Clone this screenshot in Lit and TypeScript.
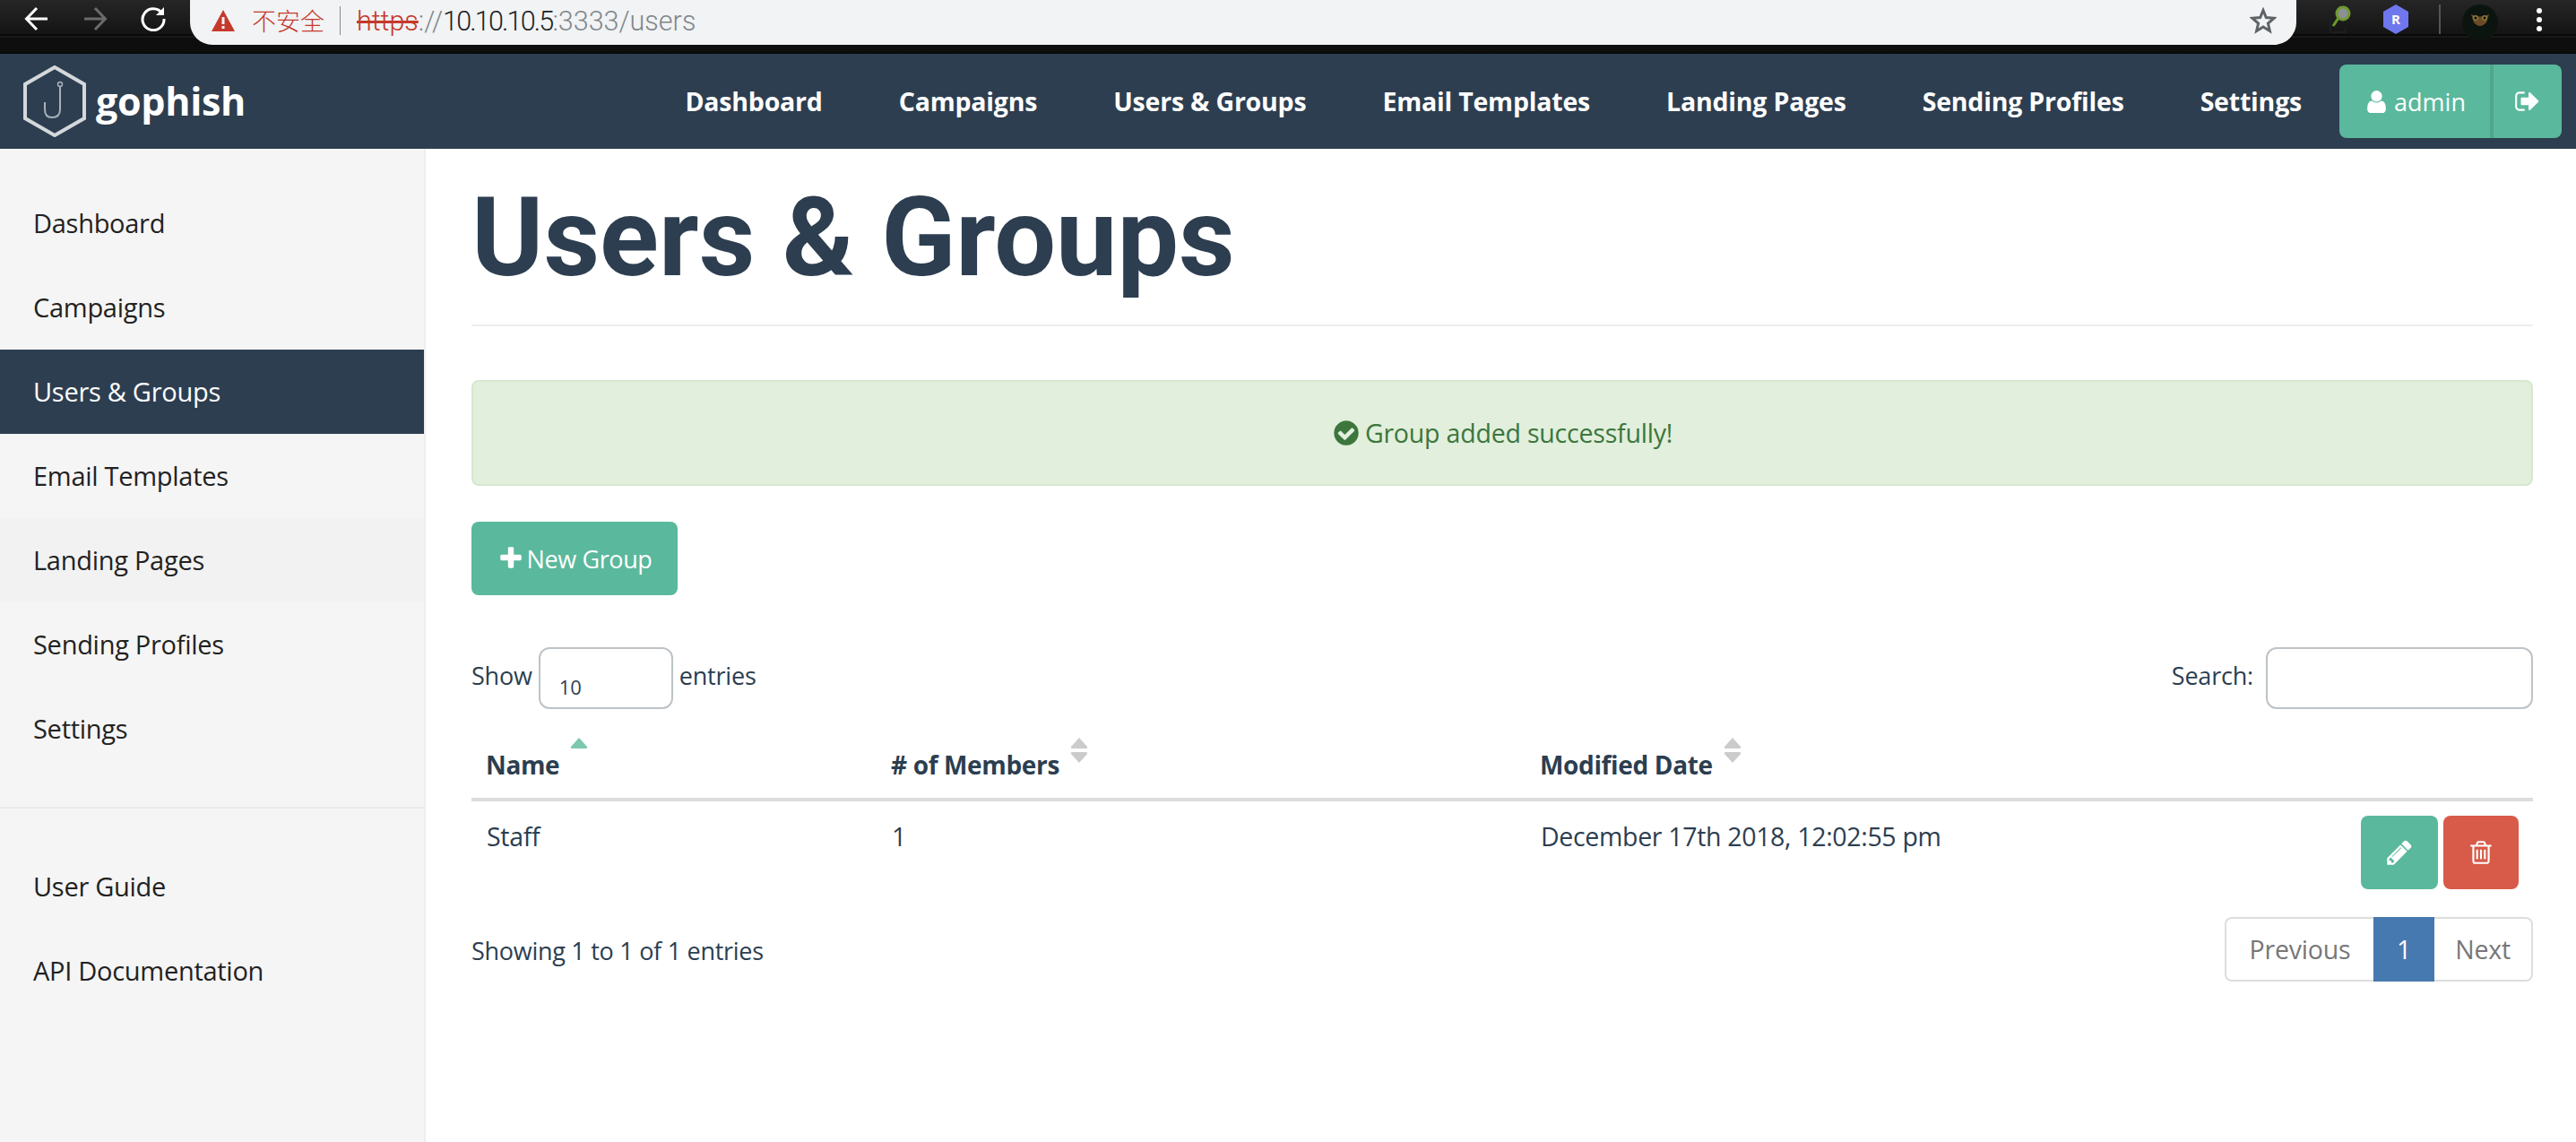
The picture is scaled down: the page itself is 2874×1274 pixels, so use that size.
import { LitElement, html, css, svg } from 'lit'
import { customElement } from 'lit/decorators.js'

const FA = {
  check: 'M1412 734q0-28-18-46l-91-90q-19-19-45-19t-45 19l-408 407-226-226q-19-19-45-19t-45 19l-91 90q-18 18-18 46 0 27 18 45l362 362q19 19 45 19 27 0 46-19l543-543q18-18 18-45zm252 162q0 209-103 385.5t-279.5 279.5-385.5 103-385.5-103-279.5-279.5-103-385.5 103-385.5 279.5-279.5 385.5-103 385.5 103 279.5 279.5 103 385.5z',
  user: 'M1536 1399q0 109-62.5 187t-150.5 78h-854q-88 0-150.5-78t-62.5-187q0-85 8.5-160.5t31.5-152 58.5-131 94-89 134.5-34.5q131 128 313 128t313-128q76 0 134.5 34.5t94 89 58.5 131 31.5 152 8.5 160.5zm-256-887q0 159-112.5 271.5t-271.5 112.5-271.5-112.5-112.5-271.5 112.5-271.5 271.5-112.5 271.5 112.5 112.5 271.5z',
  plus: 'M1600 736v192q0 40-28 68t-68 28h-416v416q0 40-28 68t-68 28h-192q-40 0-68-28t-28-68v-416h-416q-40 0-68-28t-28-68v-192q0-40 28-68t68-28h416v-416q0-40 28-68t68-28h192q40 0 68 28t28 68v416h416q40 0 68 28t28 68z',
  signOut: 'M704 1440q0 4 1 20t.5 26.5-3 23.5-10 19.5-20.5 6.5h-320q-119 0-203.5-84.5t-84.5-203.5v-704q0-119 84.5-203.5t203.5-84.5h320q13 0 22.5 9.5t9.5 22.5q0 4 1 20t.5 26.5-3 23.5-10 19.5-20.5 6.5h-320q-66 0-113 47t-47 113v704q0 66 47 113t113 47h312l11.5 1 11.5 3 8 5.5 7 9 2 13.5zm928-544q0 26-19 45l-544 544q-19 19-45 19t-45-19-19-45v-288h-448q-26 0-45-19t-19-45v-384q0-26 19-45t45-19h448v-288q0-26 19-45t45-19 45 19l544 544q19 19 19 45z',
  pencil: 'M491 1536l91-91-235-235-91 91v107h128v128h107zm523-928q0-22-22-22-10 0-17 7l-542 542q-7 7-7 17 0 22 22 22 10 0 17-7l542-542q7-7 7-17zm-54-192l416 416-832 832h-416v-416zm683 96q0 53-37 90l-166 166-416-416 166-165q36-38 90-38 53 0 91 38l235 234q37 39 37 91z',
  trash: 'M704 736v576q0 14-9 23t-23 9h-64q-14 0-23-9t-9-23v-576q0-14 9-23t23-9h64q14 0 23 9t9 23zm256 0v576q0 14-9 23t-23 9h-64q-14 0-23-9t-9-23v-576q0-14 9-23t23-9h64q14 0 23 9t9 23zm256 0v576q0 14-9 23t-23 9h-64q-14 0-23-9t-9-23v-576q0-14 9-23t23-9h64q14 0 23 9t9 23zm128 724v-948h-896v948q0 22 7 40.5t14.5 27 10.5 8.5h832q3 0 10.5-8.5t14.5-27 7-40.5zm-672-1076h448l-48-117q-7-9-17-11h-317q-10 2-17 11zm928 32v64q0 14-9 23t-23 9h-96v948q0 83-47 143.5t-113 60.5h-832q-66 0-113-58.5t-47-141.5v-952h-96q-14 0-23-9t-9-23v-64q0-14 9-23t23-9h309l70-167q15-37 54-63t79-26h320q40 0 79 26t54 63l70 167h309q14 0 23 9t9 23z',
}

const fa = (d: string, size: number) =>
  html`<svg class="fa" width=${size} height=${size} viewBox="0 0 1792 1792" fill="currentColor"><path d=${d}></path></svg>`

// sort arrows of the table head, asc = only the upper one, lit in green
const sortIcon = (asc: boolean) => html`<svg class="sort" width="20" height="28" viewBox="0 0 20 28">
  ${asc
    ? svg`<path d="M10 0 L19 10 Q20 12 17 12 L3 12 Q0 12 1 10 Z" fill="#7cc8b1"></path>`
    : svg`<path d="M10 0 L19 10 Q20 12 17 12 L3 12 Q0 12 1 10 Z" fill="#cbcbcb"></path>
          <path d="M10 28 L19 18 Q20 16 17 16 L3 16 Q0 16 1 18 Z" fill="#cbcbcb"></path>`}
</svg>`

const topNav = ['Dashboard', 'Campaigns', 'Users & Groups', 'Email Templates', 'Landing Pages', 'Sending Profiles', 'Settings']
const sideNav = ['Dashboard', 'Campaigns', 'Users & Groups', 'Email Templates', 'Landing Pages', 'Sending Profiles', 'Settings']

@customElement('app-root')
export class AppRoot extends LitElement {
  static styles = css`
    :host {
      display: flex;
      flex-direction: column;
      height: 1274px;
      overflow: hidden;
      background: #fff;
      color: #2c3e50;
      font-family: "Open Sans", "Liberation Sans", sans-serif;
      font-size: 28.5px;
    }
    .fa { display: block; flex: none; }

    /* browser chrome */
    .chrome {
      height: 60px;
      flex: none;
      display: flex;
      background: linear-gradient(#262626 0, #141414 38px, #000 39px, #222 41px, #0e0e0e 42px, #0d0d0d 59px, #000 60px);
    }
    .tools { width: 212px; flex: none; display: flex; align-items: flex-start; padding: 7px 0 0 27px; gap: 37px; box-sizing: border-box; }
    .pill {
      width: 2350px;
      height: 50px;
      flex: none;
      box-sizing: border-box;
      background: #f1f3f4;
      border-radius: 0 0 25px 25px / 0 0 25px 25px;
      display: flex;
      align-items: center;
      padding: 0 22px 4px 24px;
      font-family: Roboto, sans-serif;
      font-size: 30.5px;
      font-weight: 300;
      color: #80868b;
    }
    .unsafe {
      font-family: "Noto Sans CJK SC", sans-serif;
      color: #c5392c;
      font-size: 27px;
      margin-left: 19px;
      padding-right: 17px;
      border-right: 1.5px solid #8a8a8a;
      line-height: 32px;
      margin-right: 18px;
    }
    .strike { color: #c5392c; text-decoration: line-through; }
    .host { color: #202124; font-weight: 300; letter-spacing: -1.8px; }
    .star { margin-left: auto; }
    .exts { flex: 1; display: flex; align-items: flex-start; padding: 5px 0 0 36px; }

    /* navbar */
    .navbar {
      height: 106px;
      flex: none;
      background: #2d3e50;
      display: flex;
      align-items: center;
      padding-right: 16px;
      box-sizing: border-box;
    }
    .brand {
      display: flex;
      align-items: flex-start;
      padding-left: 26px;
      color: #fff;
      font-size: 43px;
      font-weight: 700;
      gap: 11px;
      letter-spacing: -0.3px;
    }
    .brand span { line-height: 60px; padding-top: 10px; }
    .links { margin-left: auto; display: flex; gap: 85px; margin-right: 42px; }
    .links a { color: #fff; font-weight: 700; font-size: 28.5px; white-space: nowrap; letter-spacing: -0.2px; }
    .btn-group { display: flex; height: 82px; border-radius: 8px; overflow: hidden; background: #5ab89c; color: #fff; }
    .btn-admin { width: 168px; display: flex; align-items: center; justify-content: center; gap: 5px; border-right: 4px solid #4fa78c; font-size: 27px; }
    .btn-out { width: 76px; display: flex; align-items: center; justify-content: center; }

    .body { flex: 1; display: flex; min-height: 0; }

    /* sidebar */
    .sidebar {
      width: 475px;
      flex: none;
      box-sizing: border-box;
      background: #f5f5f5;
      border-right: 2px solid #eeeeee;
      padding-top: 36px;
      color: #222;
    }
    .sidebar a { display: flex; align-items: center; height: 94px; box-sizing: border-box; padding: 0 0 2px 37px; font-size: 29px; letter-spacing: -0.28px; }
    .sidebar a.active { background: #2d3e50; color: #fff; }
    .sidebar a.dim { background: #f2f2f2; }
    .sidebar hr { margin: 40px 0 40px; border: 0; border-top: 2px solid #eaeaea; }

    /* main */
    .main { flex: 1; min-width: 0; padding: 0 48px 0 51px; }
    h1 {
      margin: 0;
      height: 198px;
      box-sizing: border-box;
      border-bottom: 2px solid #eeeeee;
      font-family: Roboto, sans-serif;
      font-weight: 700;
      font-size: 122px;
      line-height: 199px;
      color: #2d3e50;
      white-space: nowrap;
    }
    .alert {
      margin-top: 60px;
      height: 118px;
      box-sizing: border-box;
      background: #e1efdc;
      border: 2px solid #d6e8cd;
      border-radius: 8px;
      color: #3c763d;
      display: flex;
      align-items: center;
      justify-content: center;
      gap: 5px;
      font-size: 28.5px;
      letter-spacing: -0.2px;
    }
    .btn-new {
      margin-top: 40px;
      width: 230px;
      height: 82px;
      border-radius: 8px;
      background: #5ab89c;
      color: #fff;
      display: flex;
      align-items: center;
      justify-content: center;
      gap: 3px;
      font-size: 27px;
      letter-spacing: -0.4px;
    }
    .controls {
      margin-top: 58px;
      height: 69px;
      display: flex;
      align-items: flex-start;
      justify-content: space-between;
      font-size: 27px;
      letter-spacing: -0.2px;
      line-height: 64px;
    }
    .controls > div { display: flex; align-items: flex-start; gap: 7px; }
    .box { box-sizing: border-box; height: 69px; border: 2px solid #bdc3c7; border-radius: 12px; background: #fff; }
    .select { width: 150px; padding: 24px 0 0 21px; font-size: 22px; line-height: 36px; letter-spacing: 0; }
    .search { width: 298px; margin-left: 7px; }

    table { width: 100%; border-collapse: collapse; table-layout: fixed; }
    th {
      height: 99px;
      padding: 0 0 0 16px;
      border-bottom: 4px solid #dddddd;
      text-align: left;
      vertical-align: bottom;
      font-weight: 700;
      font-size: 28px;
      letter-spacing: -0.35px;
    }
    .head { display: flex; align-items: flex-start; gap: 12px; height: 67px; }
    .head span { padding-top: 10px; line-height: 40px; }
    .sort { display: block; margin-top: 0; }
    td { height: 116px; padding: 16px 0 0 17px; box-sizing: border-box; vertical-align: top; line-height: 46px; font-size: 28.5px; letter-spacing: -0.33px; }
    .actions { display: flex; justify-content: flex-end; gap: 6px; padding-right: 16px; }
    .act { height: 82px; border-radius: 8px; display: flex; align-items: center; justify-content: center; color: #fff; }
    .act.edit { width: 86px; background: #5ab89c; }
    .act.del { width: 84px; background: #d85a49; }

    .footer { margin-top: 15px; display: flex; justify-content: space-between; align-items: center; font-size: 27px; letter-spacing: -0.28px; }
    .footer > span { padding-top: 2px; }
    .pager { display: flex; height: 72px; box-sizing: border-box; color: #777; font-size: 28.5px; letter-spacing: -0.2px; }
    .pager div { display: flex; align-items: center; justify-content: center; box-sizing: border-box; border: 2px solid #ddd; background: #fff; }
    .pager .prev { width: 166px; border-right: 0; border-radius: 8px 0 0 8px; }
    .pager .cur { width: 68px; background: #4679b0; color: #fff; border-color: #4679b0; }
    .pager .next { width: 110px; border-left: 0; border-radius: 0 8px 8px 0; }
  `

  render() {
    return html`
      <div class="chrome">
        <div class="tools">
          <svg width="28" height="28" viewBox="0 0 28 28" fill="none" stroke="#fff" stroke-width="3"><path d="M26 14H3M14 2 2.500 14 14 26"></path></svg>
          <svg width="28" height="28" viewBox="0 0 28 28" fill="none" stroke="#6b6b6b" stroke-width="3"><path d="M2 14H25M14 2 25.500 14 14 26"></path></svg>
          <svg width="28" height="28" viewBox="0 0 28 28" fill="none" stroke="#fff" stroke-width="3"><path d="M24 8A12 12 0 1 0 26 14"></path><path d="M26 1V10H17Z" fill="#fff" stroke="none"></path></svg>
        </div>
        <div class="pill">
          <svg width="26" height="24" viewBox="0 0 26 24"><path d="M13 0 26 24H0Z" fill="#c5392c"></path><rect x="11.500" y="8" width="3" height="8" fill="#f1f3f4"></rect><rect x="11.500" y="18" width="3" height="3" fill="#f1f3f4"></rect></svg>
          <span class="unsafe">不安全</span>
          <span class="strike">https</span><span>://</span><span class="host">10.10.10.5</span><span>:3333/users</span>
          <svg class="star" width="30" height="30" viewBox="0 0 30 30" fill="none" stroke="#5f6368" stroke-width="3" stroke-linejoin="miter"><path d="M15 3.500 18.300 11.600 27 12.300 20.400 18 22.400 26.500 15 22 7.600 26.500 9.600 18 3 12.300 11.700 11.600Z"></path></svg>
        </div>
        <div class="exts">
          <svg width="26" height="34" viewBox="0 0 26 34" fill="none">
            <path d="M5 8H2V31H19V26" stroke="#1e1e1e" stroke-width="2"></path>
            <circle cx="16" cy="10" r="7" fill="#8d9092" stroke="#6d9a2e" stroke-width="3"></circle>
            <path d="M11 15 5 24" stroke="#6d9a2e" stroke-width="3"></path>
          </svg>
          <svg style="margin-left:34px" width="30" height="34" viewBox="0 0 30 34">
            <path d="M15 0 29 8V25L15 33 1 25V8Z" fill="#6f77ee"></path>
            <text x="15" y="22" font-family="Open Sans" font-weight="700" font-size="15" fill="#fff" text-anchor="middle">R</text>
          </svg>
          <svg style="margin-left:33px" width="2" height="33" viewBox="0 0 2 33"><rect width="2" height="33" fill="#555"></rect></svg>
          <svg style="margin-left:24px" width="40" height="40" viewBox="0 0 40 40">
            <circle cx="20" cy="20" r="20" fill="#0c1410"></circle>
            <path d="M10 11Q20 16 30 11L27 20Q20 28 13 20Z" fill="#6b4a28"></path>
            <circle cx="15" cy="15" r="3" fill="#8a7a3c"></circle>
            <circle cx="25" cy="15" r="3" fill="#8a7a3c"></circle>
            <circle cx="15" cy="15" r="1.500" fill="#0c0c08"></circle>
            <circle cx="25" cy="15" r="1.500" fill="#0c0c08"></circle>
          </svg>
          <svg style="margin-left:43px;margin-top:4px" width="6" height="28" viewBox="0 0 6 28" fill="#fff">
            <circle cx="3" cy="3" r="3"></circle><circle cx="3" cy="13" r="3"></circle><circle cx="3" cy="23" r="3"></circle>
          </svg>
        </div>
      </div>

      <div class="navbar">
        <div class="brand">
          <svg width="70" height="80" viewBox="0 0 70 80" fill="none">
            <path d="M35 2 68 21V59L35 78 2 59V21Z" stroke="#d4d8db" stroke-width="4"></path>
            <circle cx="41" cy="21" r="2.500" stroke="#a9b2ba" stroke-width="1.500"></circle>
            <path d="M41 24V49Q41 58 32 58 24 58 24 49V41" stroke="#a9b2ba" stroke-width="2"></path>
          </svg>
          <span>gophish</span>
        </div>
        <div class="links">${topNav.map(n => html`<a>${n}</a>`)}</div>
        <div class="btn-group">
          <div class="btn-admin">${fa(FA.user, 29)}<span>admin</span></div>
          <div class="btn-out">${fa(FA.signOut, 30)}</div>
        </div>
      </div>

      <div class="body">
        <nav class="sidebar">
          ${sideNav.map(n => html`<a class="${n === 'Users & Groups' ? 'active' : n === 'Landing Pages' ? 'dim' : ''}">${n}</a>`)}
          <hr />
          <a>User Guide</a>
          <a>API Documentation</a>
        </nav>

        <main class="main">
          <h1>Users &amp; Groups</h1>
          <div class="alert">${fa(FA.check, 32)}<span>Group added successfully!</span></div>
          <div class="btn-new">${fa(FA.plus, 30)}<span>New Group</span></div>

          <div class="controls">
            <div>Show <div class="box select">10</div> entries</div>
            <div>Search: <div class="box search"></div></div>
          </div>

          <table>
            <colgroup><col style="width:452px" /><col style="width:724px" /><col /><col style="width:500px" /></colgroup>
            <thead>
              <tr>
                <th><div class="head"><span>Name</span>${sortIcon(true)}</div></th>
                <th><div class="head"><span># of Members</span>${sortIcon(false)}</div></th>
                <th><div class="head"><span>Modified Date</span>${sortIcon(false)}</div></th>
                <th></th>
              </tr>
            </thead>
            <tbody>
              <tr>
                <td>Staff</td>
                <td>1</td>
                <td>December 17th 2018, 12:02:55 pm</td>
                <td>
                  <div class="actions">
                    <div class="act edit">${fa(FA.pencil, 32)}</div>
                    <div class="act del">${fa(FA.trash, 30)}</div>
                  </div>
                </td>
              </tr>
            </tbody>
          </table>

          <div class="footer">
            <span>Showing 1 to 1 of 1 entries</span>
            <div class="pager">
              <div class="prev">Previous</div>
              <div class="cur">1</div>
              <div class="next">Next</div>
            </div>
          </div>
        </main>
      </div>
    `
  }
}
